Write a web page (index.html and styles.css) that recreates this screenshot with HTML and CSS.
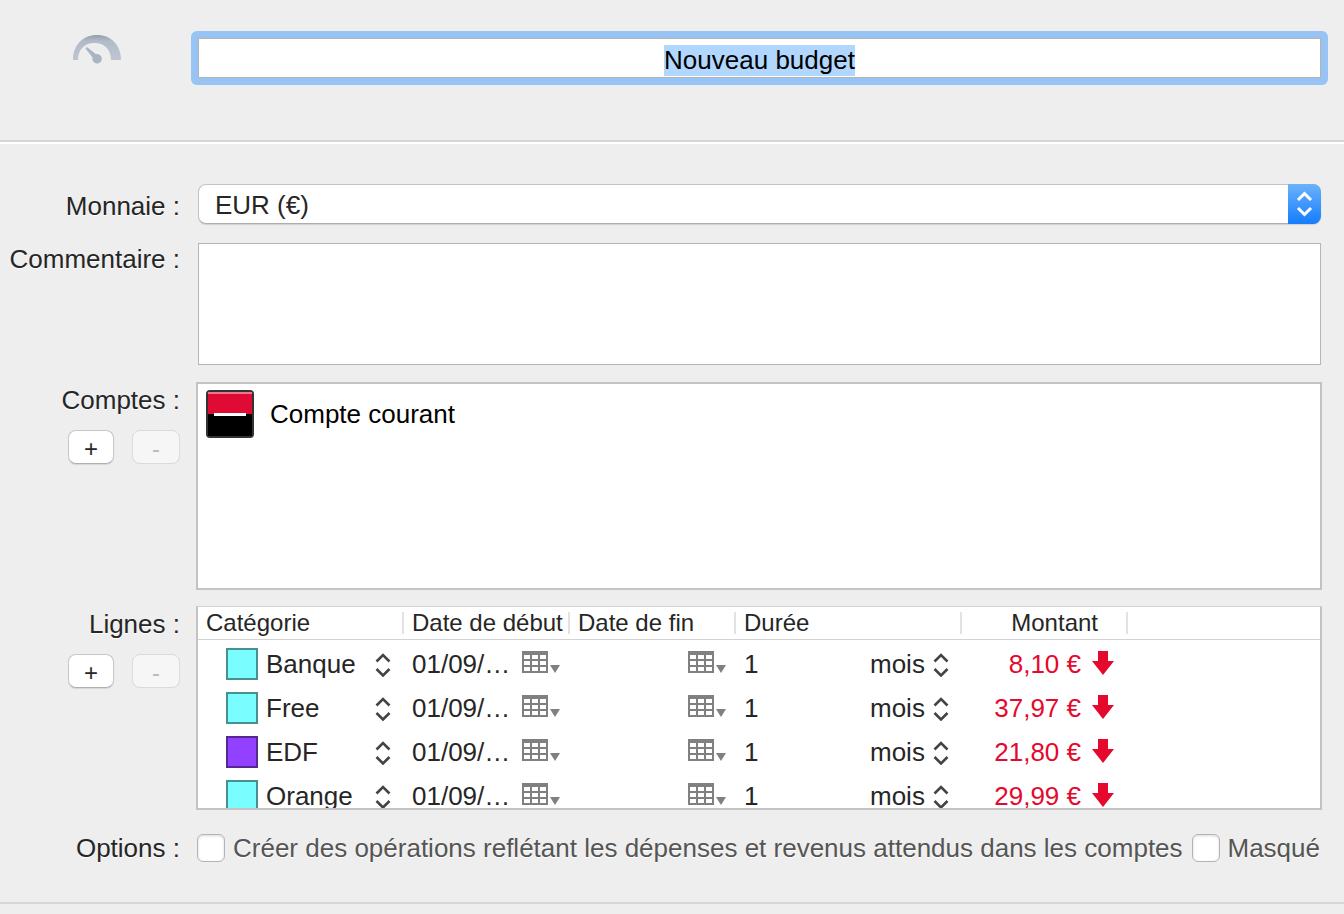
FILE: index.html
```
<!doctype html>
<html lang="fr">
<head>
  <meta charset="UTF-8">
  <meta name="viewport" content="width=device-width, initial-scale=1.0">
  <title>Nouveau budget</title>
  <link rel="stylesheet" href="styles.css">
</head>
<body>
<!-- shared icons -->
<svg class="sprite" aria-hidden="true">
  <symbol id="updown" viewBox="0 0 16 26">
    <path d="M1.500 10.500L8 4l6.500 6.500M1.500 18L8 24.500l6.500-6.500" fill="none" stroke="currentColor" stroke-width="2.6"/>
  </symbol>
  <symbol id="calendar" viewBox="0 0 38 26">
    <path fill="#808080" fill-rule="evenodd" d="M0 0h26v22H0zM2 4v4h6V4zM10 4v4h6V4zM18 4v4h6V4zM2 10v4h6v-4zM10 10v4h6v-4zM18 10v4h6v-4zM2 16v4h6v-4zM10 16v4h6v-4zM18 16v4h6v-4z"/>
    <path fill="#808080" d="M28 14h10l-5 8z"/>
  </symbol>
  <symbol id="down" viewBox="0 0 22 26">
    <path fill="#e4092d" d="M6 0h10v10h6L11 24 0 10h6z"/>
  </symbol>
</svg>

<form>
  <header class="title-bar">
    <svg class="gauge" width="48" height="51" viewBox="0 0 48 51" aria-hidden="true">
      <defs>
        <linearGradient id="metal" x1="0" y1="0" x2="0" y2="1">
          <stop offset="0" stop-color="#929fac"/>
          <stop offset=".25" stop-color="#b2bcc8"/>
          <stop offset="1" stop-color="#bdc5d1"/>
        </linearGradient>
      </defs>
      <path fill="url(#metal)" d="M0 26C0 11 10 1 24 1s24 10 24 25H38C38 15 31 9 21.500 9S5 15 5 26z"/>
      <path fill="#a9b5c2" d="M12.500 14.500l1.500-1.500 9 7.200a4.700 4.700 0 1 1-3.400 3.200z"/>
    </svg>
    <div class="focus-ring">
      <input class="title" id="title" type="text" value="Nouveau budget" aria-label="Nom du budget" autofocus>
    </div>
  </header>

  <main class="fields">
    <label class="label currency-label" for="currency">Monnaie :</label>
    <div class="popup">
      <select id="currency">
        <option>EUR (€)</option>
      </select>
      <span class="popup-arrows">
        <svg width="17" height="26" viewBox="0 0 17 26" aria-hidden="true">
          <path d="M2 9l6.500-6.500L15 9M2 17l6.500 6.500L15 17" fill="none" stroke="#fff" stroke-width="3"/>
        </svg>
      </span>
    </div>

    <label class="label" for="comment">Commentaire :</label>
    <textarea id="comment"></textarea>

    <div class="side">
      <span class="label">Comptes :</span>
      <div class="buttons">
        <button class="add" type="button">+</button>
        <button class="remove" type="button" disabled>-</button>
      </div>
    </div>
    <ul class="box accounts">
      <li>
        <svg width="48" height="48" viewBox="0 0 48 48" aria-hidden="true">
          <rect width="48" height="48" rx="4" fill="#333"/>
          <path fill="#e00b34" d="M2 2h44v22H2z"/>
          <path fill="#f0778b" d="M2 2h44v2H2z"/>
          <path fill="#000" d="M2 24h44v22H2z"/>
          <path fill="#fff" d="M8 23h32v3H8z"/>
        </svg>
        Compte courant
      </li>
    </ul>

    <div class="side">
      <span class="label">Lignes :</span>
      <div class="buttons">
        <button class="add" type="button">+</button>
        <button class="remove" type="button" disabled>-</button>
      </div>
    </div>
    <div class="box lines">
      <table>
        <colgroup>
          <col class="col-category">
          <col class="col-date">
          <col class="col-date">
          <col class="col-duration">
          <col class="col-amount">
          <col>
        </colgroup>
        <thead>
          <tr>
            <th><span>Catégorie</span></th>
            <th><span>Date de début</span></th>
            <th><span>Date de fin</span></th>
            <th><span>Durée</span></th>
            <th class="amount-head"><span>Montant</span></th>
            <th></th>
          </tr>
        </thead>
        <tbody>
          <tr>
            <td>
              <div class="cell category">
                <i class="swatch cyan"></i>
                <div class="pick"><select aria-label="Catégorie"><option>Banque</option></select><svg><use href="#updown"/></svg></div>
              </div>
            </td>
            <td><div class="cell date"><input type="text" value="01/09/…" aria-label="Date de début"><button type="button" aria-label="Calendrier"><svg><use href="#calendar"/></svg></button></div></td>
            <td><div class="cell date"><input type="text" aria-label="Date de fin"><button type="button" aria-label="Calendrier"><svg><use href="#calendar"/></svg></button></div></td>
            <td>
              <div class="cell duration">
                <input type="text" value="1" aria-label="Durée">
                <div class="pick"><select aria-label="Unité"><option>mois</option></select><svg><use href="#updown"/></svg></div>
              </div>
            </td>
            <td><div class="cell amount">8,10 €<svg><use href="#down"/></svg></div></td>
            <td></td>
          </tr>
          <tr>
            <td>
              <div class="cell category">
                <i class="swatch cyan"></i>
                <div class="pick"><select aria-label="Catégorie"><option>Free</option></select><svg><use href="#updown"/></svg></div>
              </div>
            </td>
            <td><div class="cell date"><input type="text" value="01/09/…" aria-label="Date de début"><button type="button" aria-label="Calendrier"><svg><use href="#calendar"/></svg></button></div></td>
            <td><div class="cell date"><input type="text" aria-label="Date de fin"><button type="button" aria-label="Calendrier"><svg><use href="#calendar"/></svg></button></div></td>
            <td>
              <div class="cell duration">
                <input type="text" value="1" aria-label="Durée">
                <div class="pick"><select aria-label="Unité"><option>mois</option></select><svg><use href="#updown"/></svg></div>
              </div>
            </td>
            <td><div class="cell amount">37,97 €<svg><use href="#down"/></svg></div></td>
            <td></td>
          </tr>
          <tr>
            <td>
              <div class="cell category">
                <i class="swatch purple"></i>
                <div class="pick"><select aria-label="Catégorie"><option>EDF</option></select><svg><use href="#updown"/></svg></div>
              </div>
            </td>
            <td><div class="cell date"><input type="text" value="01/09/…" aria-label="Date de début"><button type="button" aria-label="Calendrier"><svg><use href="#calendar"/></svg></button></div></td>
            <td><div class="cell date"><input type="text" aria-label="Date de fin"><button type="button" aria-label="Calendrier"><svg><use href="#calendar"/></svg></button></div></td>
            <td>
              <div class="cell duration">
                <input type="text" value="1" aria-label="Durée">
                <div class="pick"><select aria-label="Unité"><option>mois</option></select><svg><use href="#updown"/></svg></div>
              </div>
            </td>
            <td><div class="cell amount">21,80 €<svg><use href="#down"/></svg></div></td>
            <td></td>
          </tr>
          <tr>
            <td>
              <div class="cell category">
                <i class="swatch cyan"></i>
                <div class="pick"><select aria-label="Catégorie"><option>Orange</option></select><svg><use href="#updown"/></svg></div>
              </div>
            </td>
            <td><div class="cell date"><input type="text" value="01/09/…" aria-label="Date de début"><button type="button" aria-label="Calendrier"><svg><use href="#calendar"/></svg></button></div></td>
            <td><div class="cell date"><input type="text" aria-label="Date de fin"><button type="button" aria-label="Calendrier"><svg><use href="#calendar"/></svg></button></div></td>
            <td>
              <div class="cell duration">
                <input type="text" value="1" aria-label="Durée">
                <div class="pick"><select aria-label="Unité"><option>mois</option></select><svg><use href="#updown"/></svg></div>
              </div>
            </td>
            <td><div class="cell amount">29,99 €<svg><use href="#down"/></svg></div></td>
            <td></td>
          </tr>
        </tbody>
      </table>
    </div>

    <span class="label options-label">Options :</span>
    <div class="options">
      <label><input type="checkbox">Créer des opérations reflétant les dépenses et revenus attendus dans les comptes</label>
      <label><input type="checkbox">Masqué</label>
    </div>
  </main>
</form>
<script>
  // name is ready to be replaced as soon as the sheet opens
  const title = document.getElementById('title');
  title.focus();
  title.select();
</script>
</body>
</html>
```
FILE: styles.css
```
* { box-sizing: border-box; }
html, body { margin: 0; padding: 0; }
body { background: #eee; color: #262626; font: 26px/32px "Liberation Sans", Arial, sans-serif; }
input, select, textarea, button { margin: 0; padding: 0; border: 0; border-radius: 0; background: none; color: inherit; font: inherit; outline: none; appearance: none; }
svg { display: block; flex: none; }
.sprite { display: none; }

.title-bar { display: grid; grid-template-columns: 118px 1fr; align-items: start; padding: 31px 16px 55px 73px; }
.gauge { margin-top: 3px; }
.focus-ring { padding: 7px; border-radius: 6px; background: #97c4f5; }
.title { display: block; width: 100%; height: 40px; padding: 4px 4px 0; border: 1px solid #b3b3b3; background: #fff; color: #000; text-align: center; }
.title::selection { background: #b2d7fe; color: #000; }

.fields { display: grid; grid-template-columns: 180px 1fr; gap: 16px; padding: 42px 22px 38px 0; border-top: 2px solid #d6d6d6; border-bottom: 2px solid #d6d6d6; box-shadow: inset 0 2px #fff, 0 2px #fff; }
.label { display: block; padding-top: 2px; text-align: right; text-shadow: 0 1px 0 #fff; }
.currency-label { padding-top: 6px; }
.side { display: flex; flex-direction: column; gap: 14px; }

.buttons { display: flex; justify-content: flex-end; gap: 18px; }
.buttons button { height: 34px; padding-top: 3px; border: 1px solid #c8c8c8; border-bottom-color: #b0b0b0; border-radius: 8px; background: #fff; font-size: 24px; line-height: 29px; box-shadow: 0 1px 1px rgba(0, 0, 0, .1); }
.buttons .add { width: 46px; }
.buttons .remove { width: 48px; border-color: #dadada; background: #f6f6f6; color: #bbb; box-shadow: none; }

.popup { display: flex; height: 40px; margin: 0 1px 1px 2px; border: 1px solid #c4c4c4; border-bottom-color: #adadad; border-radius: 8px; background: #fff; box-shadow: 0 1px 1px rgba(0, 0, 0, .12); }
.popup select { flex: 1; padding: 2px 0 0 16px; }
.popup-arrows { display: flex; align-items: center; justify-content: center; width: 33px; margin: -1px; border-radius: 0 8px 8px 0; background: linear-gradient(#6cb2f9, #147dff); }

#comment { display: block; height: 122px; margin: 2px 1px 1px 2px; padding: 4px; border: 1px solid #b5b5b5; background: #fff; resize: none; }

.box { margin: 0; border: 2px solid #c3c3c3; background: #fff; overflow: hidden; }
.accounts { height: 208px; padding: 6px 8px; list-style: none; color: #000; }
.accounts li { display: flex; align-items: center; gap: 16px; }

.lines { height: 204px; border-top: 1px solid #d2d2d2; }
table { width: 100%; table-layout: fixed; border-spacing: 0; }
.col-category { width: 206px; }
.col-date, .col-amount { width: 166px; }
.col-duration { width: 226px; }
th { height: 33px; padding: 5px 0; border-bottom: 1px solid #d2d2d2; font-size: 24px; line-height: 22px; font-weight: normal; text-align: left; white-space: nowrap; }
th span { display: block; padding-left: 8px; border-right: 2px solid #e2e2e2; }
.amount-head { text-align: right; }
.amount-head span { padding-right: 28px; }
td { padding: 8px 0 4px; }
.cell { display: flex; align-items: center; height: 32px; }
.cell input { flex: 1; min-width: 0; }

.category { gap: 8px; padding: 0 13px 0 28px; }
.swatch { flex: none; width: 32px; height: 32px; border: 2px solid; }
.cyan { border-color: #46918f; background: #7afdff; }
.purple { border-color: #542793; background: #9141ff; }
.pick { display: grid; align-items: center; color: #444; }
.pick select, .pick svg { grid-area: 1 / 1; }
.pick select { width: 100%; padding-right: 24px; color: #262626; }
.pick svg { justify-self: end; width: 16px; height: 26px; pointer-events: none; }
.category .pick { flex: 1; }

.date { padding: 0 10px 0 8px; }
.date svg { width: 38px; height: 26px; }
.duration { padding: 0 13px 0 8px; }
.amount { justify-content: flex-end; gap: 11px; padding-right: 14px; color: #e4092d; }
.amount svg { width: 22px; height: 26px; }

.options-label { padding-top: 6px; }
.options { display: flex; justify-content: space-between; padding: 6px 2px 0 1px; color: #555; white-space: nowrap; }
.options label { display: flex; align-items: center; gap: 8px; text-shadow: 0 1px 0 #fff; }
.options input { width: 28px; height: 28px; border: 1px solid #b4b4b4; border-radius: 6px; background: #fff; box-shadow: inset 0 1px 3px rgba(0, 0, 0, .15); }
```
